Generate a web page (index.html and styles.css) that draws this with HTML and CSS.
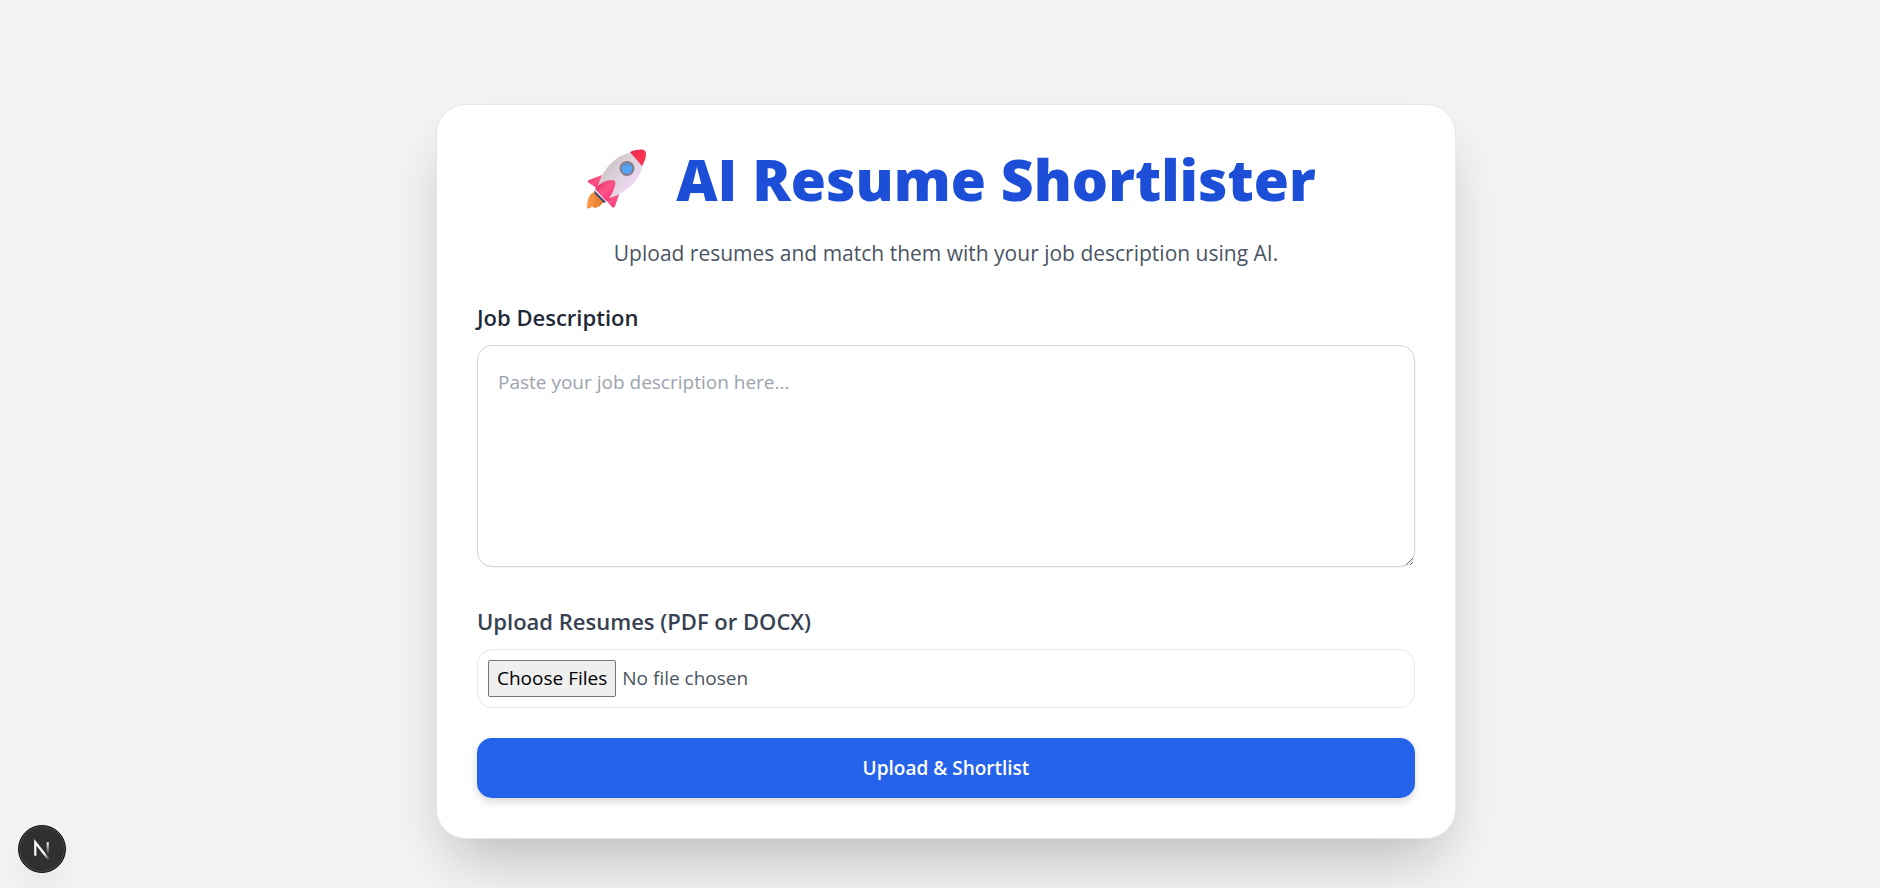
FILE: index.html
```html
<!DOCTYPE html>
<html lang="en">
<head>
<meta charset="utf-8">
<meta name="viewport" content="width=device-width, initial-scale=1">
<title>AI Resume Shortlister</title>
<link rel="stylesheet" href="styles.css">
</head>
<body>
<main class="page">
  <section class="card">
    <h1 class="title">
      <svg class="rocket" viewBox="0 0 62 62" aria-hidden="true">
        <defs>
          <linearGradient id="hull" x1="0.15" y1="0.3" x2="0.75" y2="0.8">
            <stop offset="0" stop-color="#cfc4c8"/><stop offset="0.5" stop-color="#ded3dc"/><stop offset="1" stop-color="#eed8f5"/>
          </linearGradient>
          <linearGradient id="fin" x1="0" y1="0" x2="1" y2="1">
            <stop offset="0" stop-color="#d62a56"/><stop offset="0.5" stop-color="#ff5588"/><stop offset="1" stop-color="#f51d70"/>
          </linearGradient>
          <linearGradient id="nose" x1="0" y1="0" x2="1" y2="1">
            <stop offset="0" stop-color="#dc2448"/><stop offset="0.6" stop-color="#ff3554"/><stop offset="1" stop-color="#e92647"/>
          </linearGradient>
          <linearGradient id="flame" x1="0" y1="0.5" x2="1" y2="0.5">
            <stop offset="0" stop-color="#ff9c48"/><stop offset="1" stop-color="#dc7828"/>
          </linearGradient>
        </defs>
        <path d="M9 44C4 45 1 50 1 60C3 61 5 60 6 58L8 60C12 60 16 57 18 53Z" fill="url(#flame)"/>
        <path d="M8 42L20 54L18 55L9 46Z" fill="#3d427e"/>
        <path d="M16 27L3 32C1 33 2 34 3 35L12 41Z" fill="url(#fin)"/>
        <path d="M34 44L29 58C28 60 27 60 26 59L19 51Z" fill="url(#fin)"/>
        <path d="M12 37C17 21 29 8 45 4L57 17C53 33 42 44 24 50Z" fill="url(#hull)"/>
        <path d="M44 4C52 1 57 1 59 3C61 5 60 11 56 18Z" fill="url(#nose)"/>
        <path d="M9 41C14 35 20 32 27 32C29 33 30 34 29 37C28 43 25 48 20 53Z" fill="url(#fin)"/>
        <circle cx="41" cy="20.500" r="7.500" fill="#897e8c"/>
        <circle cx="41" cy="20.500" r="5.200" fill="#54a4f7"/>
        <path d="M37 18a5.200 5.200 0 0 1 8 0Z" fill="#5793df"/>
      </svg>
      <span>AI Resume Shortlister</span>
    </h1>
    <p class="subtitle">Upload resumes and match them with your job description using AI.</p>
    <form class="form">
      <div class="field field-job">
        <label class="label label-dark" for="job">Job Description</label>
        <textarea class="textarea" id="job" placeholder="Paste your job description here..."></textarea>
      </div>
      <div class="field">
        <label class="label" for="resumes">Upload Resumes (PDF or DOCX)</label>
        <input class="file" id="resumes" type="file" multiple accept=".pdf,.docx">
      </div>
      <button class="submit" type="button">Upload &amp; Shortlist</button>
    </form>
  </section>
</main>
<button class="dev-badge" type="button" aria-label="Open developer tools">
  <svg class="dev-icon" viewBox="0 0 48 48" aria-hidden="true">
    <defs>
      <linearGradient id="slash" gradientUnits="userSpaceOnUse" x1="27" y1="28" x2="32" y2="35"><stop stop-color="#fff"/><stop offset="1" stop-color="#fff" stop-opacity="0"/></linearGradient>
      <linearGradient id="stem" gradientUnits="userSpaceOnUse" x1="30" y1="17" x2="30" y2="30"><stop stop-color="#fff"/><stop offset="1" stop-color="#fff" stop-opacity="0"/></linearGradient>
    </defs>
    <path d="M17 31V17L31 35" fill="none" stroke="url(#slash)" stroke-width="2.300"/>
    <path d="M30 17V29" stroke="url(#stem)" stroke-width="2.200"/>
  </svg>
</button>
</body>
</html>
```
FILE: styles.css
```css
* { box-sizing: border-box; }
body {
  margin: 0;
  min-height: 100vh;
  background: #f3f4f6;
  color: #374151;
  font-family: "Segoe UI", "Open Sans", sans-serif;
}
.page {
  display: flex;
  justify-content: center;
  padding: 104px 0 48px 12px;
}
.card {
  width: 100%;
  max-width: 1020px;
  padding: 40px;
  background: #fff;
  border: 1px solid #e5e7eb;
  border-radius: 30px;
  box-shadow: 0 31px 62px -15px rgba(0, 0, 0, 0.25);
}
.title {
  display: flex;
  align-items: center;
  justify-content: center;
  gap: 28px;
  margin: 0 0 24px;
  padding-left: 10px;
  color: #1d4ed8;
  font-size: 57px;
  font-weight: 800;
  line-height: 68px;
}
.rocket { width: 62px; height: 62px; }
.subtitle {
  margin: 0 0 32px;
  color: #4b5563;
  font-size: 21px;
  line-height: 32px;
  text-align: center;
}
.form { display: flex; flex-direction: column; gap: 30px; }
.field { display: flex; flex-direction: column; gap: 12px; }
.field-job { padding-bottom: 8px; }
.label { font-size: 22px; font-weight: 600; line-height: 32px; }
.label-dark { color: #1f2937; }
.textarea {
  display: block;
  width: 100%;
  height: 222px;
  padding: 20px;
  border: 1px solid #d1d5db;
  border-radius: 15px;
  box-shadow: 0 1px 2px rgba(0, 0, 0, 0.05);
  background: #fff;
  color: #374151;
  font: inherit;
  font-size: 19px;
  line-height: 32px;
  resize: vertical;
}
.textarea::placeholder { color: #9ca3af; }
.file {
  width: 100%;
  padding: 10px;
  border: 1px solid #e5e7eb;
  border-radius: 15px;
  color: #4b5563;
  font: inherit;
  font-size: 19px;
}
.file::file-selector-button { font: inherit; margin-right: 6px; padding: 4px 8px; line-height: 27px; border: 1px solid #767676; border-radius: 2px; background: #efefef; color: #000; }
.submit {
  height: 60px;
  border: 0;
  border-radius: 15px;
  background: #2563eb;
  box-shadow: 0 4px 8px rgba(0, 0, 0, 0.15);
  color: #fff;
  font: inherit;
  font-size: 19px;
  font-weight: 600;
}
.dev-badge {
  position: fixed;
  left: 18px;
  bottom: 15px;
  width: 48px;
  height: 48px;
  padding: 0;
  border: 1px solid #111;
  border-radius: 50%;
  background: #303030;
  box-shadow: inset 0 0 0 1px #484848, 0 16px 32px rgba(0, 0, 0, 0.06);
}
.dev-icon { display: block; width: 100%; height: 100%; }
```
